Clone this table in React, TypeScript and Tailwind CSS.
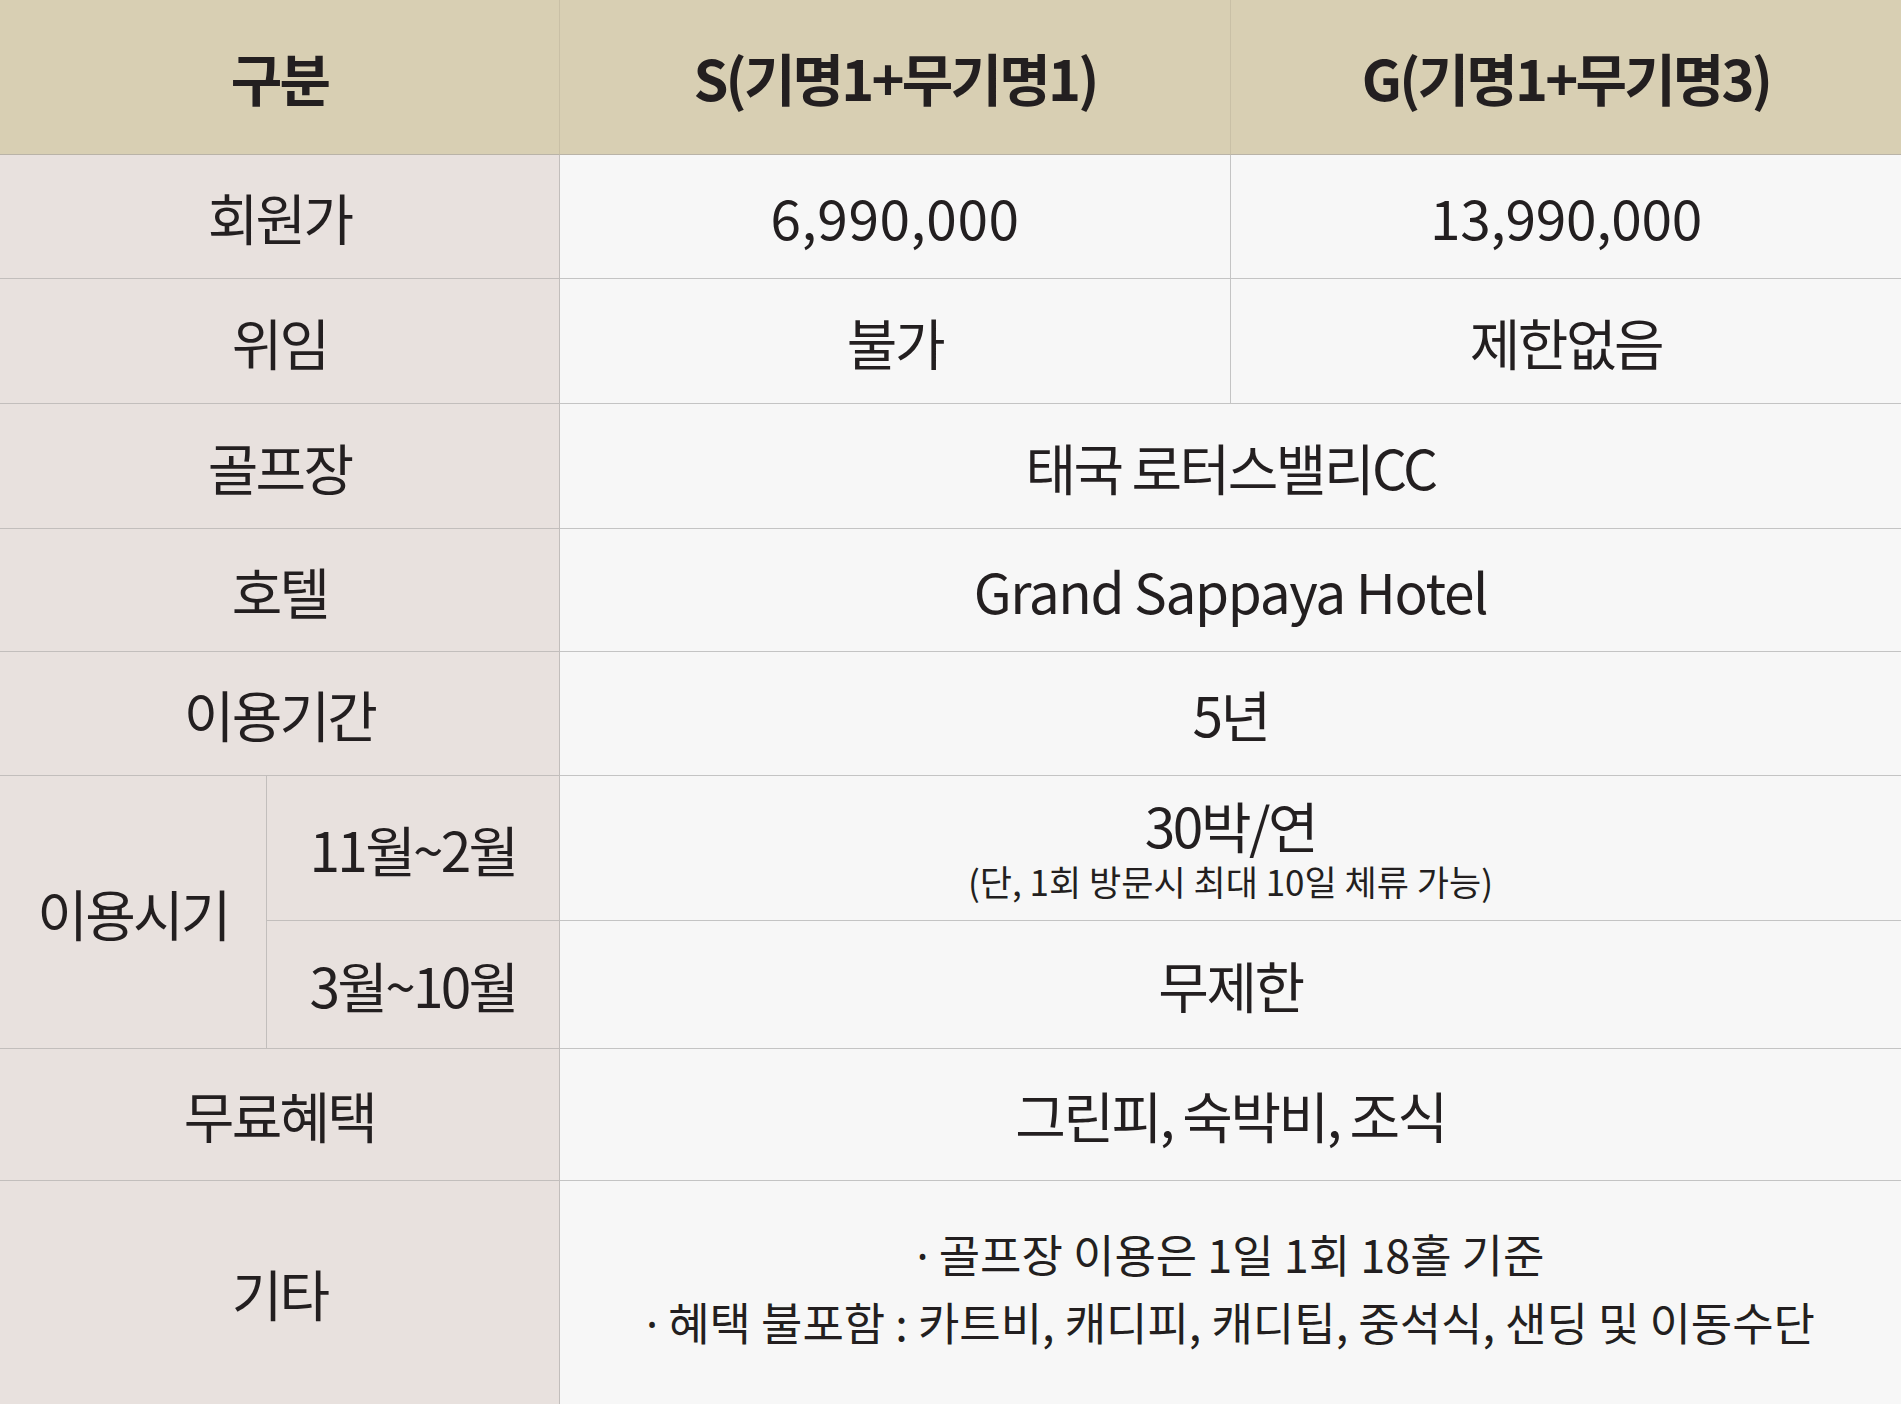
import React from "react";

const font = { fontFamily: '"Noto Sans CJK KR", "Noto Sans", sans-serif' };
const dotFont = { fontFamily: '"Noto Sans", sans-serif' };

const head = "flex items-center justify-center bg-[#d8cfb3] text-[56px] font-bold tracking-[-0.05em] text-[#231f20]";
const label = "flex items-center justify-center bg-[#e8e1de] border-r border-b border-[#c2bebc] text-[55px] tracking-[-0.05em] text-[#231f20]";
const value = "flex items-center justify-center bg-[#f7f7f7] border-b border-[#c4c4c4] text-[#231f20]";
const big = "text-[55px] tracking-[-0.045em]";

export default function App() {
  return (
    <div className="w-[1901px] h-[1404px] bg-[#f7f7f7]" style={font}>
      <div
        className="grid h-full"
        style={{
          gridTemplateColumns: "267px 293px 671px 670px",
          gridTemplateRows: "155px 124px 125px 125px 123px 124px 145px 128px 132px 223px",
        }}
      >
        {/* header */}
        <div className={`${head} col-span-2 border-r border-b border-r-[#c9c0a6] border-b-[#b9b3a7]`}>구분</div>
        <div className={`${head} border-r border-b border-r-[#c9c0a6] border-b-[#b9b3a7]`}>S(기명1+무기명1)</div>
        <div className={`${head} border-b border-b-[#b9b3a7]`}>G(기명1+무기명3)</div>

        {/* 회원가 */}
        <div className={`${label} col-span-2`}>회원가</div>
        <div className={`${value} border-r text-[55px] tracking-[0.01em]`}>6,990,000</div>
        <div className={`${value} text-[55px] tracking-[-0.005em]`}>13,990,000</div>

        {/* 위임 */}
        <div className={`${label} col-span-2`}>위임</div>
        <div className={`${value} ${big} border-r`}>불가</div>
        <div className={`${value} ${big}`}>제한없음</div>

        <div className={`${label} col-span-2`}>골프장</div>
        <div className={`${value} ${big} col-span-2`}>태국 로터스밸리CC</div>

        <div className={`${label} col-span-2`}>호텔</div>
        <div className={`${value} col-span-2 text-[55px] tracking-[-0.025em]`}>Grand Sappaya Hotel</div>

        <div className={`${label} col-span-2`}>이용기간</div>
        <div className={`${value} ${big} col-span-2`}>5년</div>

        {/* 이용시기 */}
        <div className={`${label} row-span-2`}>이용시기</div>
        <div className={label}>11월~2월</div>
        <div className={`${value} col-span-2 flex-col gap-[9px]`}>
          <span className={`${big} leading-[56px]`}>30박/연</span>
          <span className="text-[35px] leading-[40px] tracking-normal">(단, 1회 방문시 최대 10일 체류 가능)</span>
        </div>
        <div className={label}>3월~10월</div>
        <div className={`${value} ${big} col-span-2`}>무제한</div>

        <div className={`${label} col-span-2`}>무료혜택</div>
        <div className={`${value} ${big} col-span-2`}>그린피, 숙박비, 조식</div>

        <div className={`${label} col-span-2 border-b-0`}>기타</div>
        <div className={`${value} col-span-2 flex-col border-b-0 pb-[8px] text-[45px] leading-[66px] tracking-normal whitespace-nowrap`}>
          <span>
            <span style={dotFont}>·</span> 골프장 이용은 1일 1회 18홀 기준
          </span>
          <span>
            <span style={dotFont}>·</span> 혜택 불포함 : 카트비, 캐디피, 캐디팁, 중석식, 샌딩 및 이동수단
          </span>
        </div>
      </div>
    </div>
  );
}
